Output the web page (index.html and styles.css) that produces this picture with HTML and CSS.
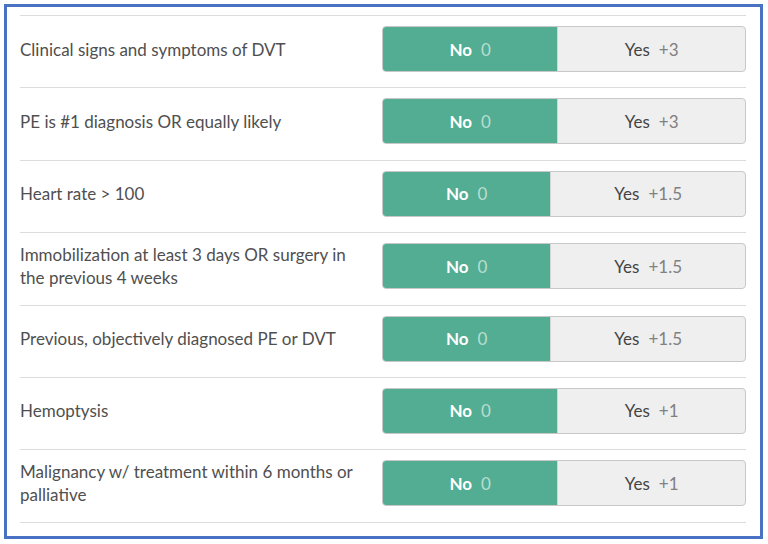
FILE: index.html
```html
<!DOCTYPE html>
<html>
<head>
<meta charset="utf-8">
<link rel="stylesheet" href="styles.css">
</head>
<body>
<div class="frame">
  <div class="list">
    <div class="row">
      <div class="label">Clinical signs and symptoms of DVT</div>
      <div class="toggle"><div class="opt on"><b>No</b><span class="pts">0</span></div><div class="opt"><b>Yes</b><span class="pts">+3</span></div></div>
    </div>
    <div class="row">
      <div class="label">PE is #1 diagnosis OR equally likely</div>
      <div class="toggle"><div class="opt on"><b>No</b><span class="pts">0</span></div><div class="opt"><b>Yes</b><span class="pts">+3</span></div></div>
    </div>
    <div class="row">
      <div class="label">Heart rate &gt; 100</div>
      <div class="toggle"><div class="opt on"><b>No</b><span class="pts">0</span></div><div class="opt"><b>Yes</b><span class="pts">+1.5</span></div></div>
    </div>
    <div class="row">
      <div class="label">Immobilization at least 3 days OR surgery in the previous 4 weeks</div>
      <div class="toggle"><div class="opt on"><b>No</b><span class="pts">0</span></div><div class="opt"><b>Yes</b><span class="pts">+1.5</span></div></div>
    </div>
    <div class="row">
      <div class="label">Previous, objectively diagnosed PE or DVT</div>
      <div class="toggle"><div class="opt on"><b>No</b><span class="pts">0</span></div><div class="opt"><b>Yes</b><span class="pts">+1.5</span></div></div>
    </div>
    <div class="row">
      <div class="label">Hemoptysis</div>
      <div class="toggle"><div class="opt on"><b>No</b><span class="pts">0</span></div><div class="opt"><b>Yes</b><span class="pts">+1</span></div></div>
    </div>
    <div class="row">
      <div class="label">Malignancy w/ treatment within 6 months or palliative</div>
      <div class="toggle"><div class="opt on"><b>No</b><span class="pts">0</span></div><div class="opt"><b>Yes</b><span class="pts">+1</span></div></div>
    </div>
  </div>
</div>
</body>
</html>
```
FILE: styles.css
```css
* { box-sizing: border-box; }
html, body { margin: 0; padding: 0; background: #fff; }
body {
  width: 768px;
  height: 544px;
  padding: 4px 5px 5px 4px;
  font-family: "Lato", "Noto Sans", sans-serif;
}
.frame {
  width: 759px;
  height: 535px;
  border: 3px solid #4a72c4;
  padding: 8px 14px 0 13px;
}
.list {
  border-top: 1px solid #dcdcdc;
}
.row {
  display: flex;
  align-items: flex-start;
  height: 72.4px;
  padding-top: 10px;
  border-bottom: 1px solid #dcdcdc;
}
.label {
  width: 362px;
  flex: none;
  height: 46px;
  display: flex;
  align-items: center;
  font-size: 17px;
  line-height: 23px;
  color: #4f4f4f;
  padding-right: 24px;
}
.toggle {
  flex: 1;
  display: flex;
  height: 46px;
  border: 1px solid #c8c8c8;
  border-radius: 4px;
  overflow: hidden;
  background: #efefef;
}
.opt {
  flex: 1 1 auto;
  display: flex;
  align-items: center;
  justify-content: center;
  gap: 9px;
  font-size: 17px;
  color: #444;
  padding: 0 20px;
}
.opt b { font-weight: 400; }
.opt .pts { color: #808080; }
.opt + .opt { border-left: 1px solid #d4d4d4; }
.opt.on {
  background: #52ad92;
  color: #fff;
}
.opt.on b { font-weight: 700; }
.opt.on .pts { color: rgba(255,255,255,0.6); }
```
